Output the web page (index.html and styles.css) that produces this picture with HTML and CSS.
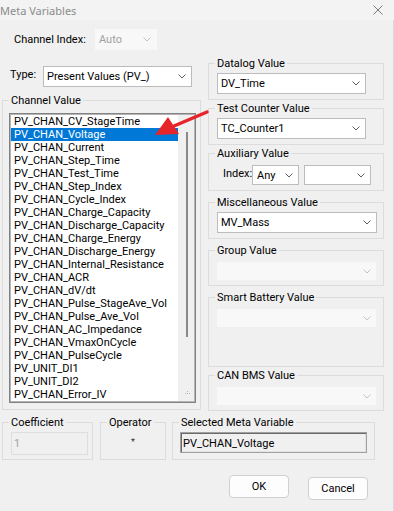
FILE: index.html
```html
<!DOCTYPE html>
<html lang="en">
<head>
    <meta charset="UTF-8">
    <meta name="viewport" content="width=device-width, initial-scale=1.0">
    <title>Meta Variables</title>
    <link rel="stylesheet" href="styles.css">
</head>
<body>
    <div class="window">
        <div class="titlebar">
            <span class="title">Meta Variables</span>
            <svg class="close" width="10" height="10" viewBox="0 0 10 10">
                <path d="M0.5 0.5L9.5 9.5M9.5 0.5L0.5 9.5" stroke="#7d7d7d" stroke-width="1" fill="none"/>
            </svg>
        </div>

        <div class="dialog">
            <div class="columns">
                <div class="left">
                    <div class="row index-row">
                        <span class="row-label">Channel Index:</span>
                        <div class="combo disabled index-combo">
                            <span>Auto</span>
                            <svg class="chev" width="8" height="5" viewBox="0 0 8 5"><path d="M0.5 0.5L4 4L7.5 0.5" fill="none"/></svg>
                        </div>
                    </div>
                    <div class="row type-row">
                        <span class="row-label">Type:</span>
                        <div class="combo type-combo">
                            <span>Present Values (PV_)</span>
                            <svg class="chev" width="8" height="5" viewBox="0 0 8 5"><path d="M0.5 0.5L4 4L7.5 0.5" fill="none"/></svg>
                        </div>
                    </div>

                    <fieldset class="group channel-group">
                        <legend>Channel Value</legend>
                        <div class="group-body">
                            <div class="listbox">
                                <ul class="items">
                                    <li>PV_CHAN_CV_StageTime</li>
                                    <li class="selected">PV_CHAN_Voltage</li>
                                    <li>PV_CHAN_Current</li>
                                    <li>PV_CHAN_Step_Time</li>
                                    <li>PV_CHAN_Test_Time</li>
                                    <li>PV_CHAN_Step_Index</li>
                                    <li>PV_CHAN_Cycle_Index</li>
                                    <li>PV_CHAN_Charge_Capacity</li>
                                    <li>PV_CHAN_Discharge_Capacity</li>
                                    <li>PV_CHAN_Charge_Energy</li>
                                    <li>PV_CHAN_Discharge_Energy</li>
                                    <li>PV_CHAN_Internal_Resistance</li>
                                    <li>PV_CHAN_ACR</li>
                                    <li>PV_CHAN_dV/dt</li>
                                    <li>PV_CHAN_Pulse_StageAve_Vol</li>
                                    <li>PV_CHAN_Pulse_Ave_Vol</li>
                                    <li>PV_CHAN_AC_Impedance</li>
                                    <li>PV_CHAN_VmaxOnCycle</li>
                                    <li>PV_CHAN_PulseCycle</li>
                                    <li>PV_UNIT_DI1</li>
                                    <li>PV_UNIT_DI2</li>
                                    <li>PV_CHAN_Error_IV</li>
                                </ul>
                                <div class="scrollbar">
                                    <div class="thumb"></div>
                                    <svg class="grip" width="5" height="4" viewBox="0 0 5 4">
                                        <rect x="2" y="0" width="1" height="1" fill="#b5b5b5"/>
                                        <rect x="0" y="2" width="1" height="1" fill="#b5b5b5"/>
                                        <rect x="2" y="2" width="1" height="1" fill="#b5b5b5"/>
                                        <rect x="4" y="2" width="1" height="1" fill="#b5b5b5"/>
                                    </svg>
                                </div>
                            </div>
                        </div>
                    </fieldset>
                </div>

                <div class="right">
                    <fieldset class="group">
                        <legend>Datalog Value</legend>
                        <div class="group-body">
                            <div class="combo short-combo">
                                <span>DV_Time</span>
                                <svg class="chev" width="8" height="5" viewBox="0 0 8 5"><path d="M0.5 0.5L4 4L7.5 0.5" fill="none"/></svg>
                            </div>
                        </div>
                    </fieldset>

                    <fieldset class="group">
                        <legend>Test Counter Value</legend>
                        <div class="group-body">
                            <div class="combo short-combo">
                                <span>TC_Counter1</span>
                                <svg class="chev" width="8" height="5" viewBox="0 0 8 5"><path d="M0.5 0.5L4 4L7.5 0.5" fill="none"/></svg>
                            </div>
                        </div>
                    </fieldset>

                    <fieldset class="group">
                        <legend>Auxiliary Value</legend>
                        <div class="group-body aux-body">
                            <span class="aux-label">Index:</span>
                            <div class="combo aux-combo">
                                <span>Any</span>
                                <svg class="chev" width="8" height="5" viewBox="0 0 8 5"><path d="M0.5 0.5L4 4L7.5 0.5" fill="none"/></svg>
                            </div>
                            <div class="combo aux-combo wide">
                                <span></span>
                                <svg class="chev" width="8" height="5" viewBox="0 0 8 5"><path d="M0.5 0.5L4 4L7.5 0.5" fill="none"/></svg>
                            </div>
                        </div>
                    </fieldset>

                    <fieldset class="group spaced">
                        <legend>Miscellaneous Value</legend>
                        <div class="group-body">
                            <div class="combo long-combo">
                                <span>MV_Mass</span>
                                <svg class="chev" width="8" height="5" viewBox="0 0 8 5"><path d="M0.5 0.5L4 4L7.5 0.5" fill="none"/></svg>
                            </div>
                        </div>
                    </fieldset>

                    <fieldset class="group spaced">
                        <legend>Group Value</legend>
                        <div class="group-body off-body">
                            <div class="combo disabled long-combo">
                                <span></span>
                                <svg class="chev" width="8" height="5" viewBox="0 0 8 5"><path d="M0.5 0.5L4 4L7.5 0.5" fill="none"/></svg>
                            </div>
                        </div>
                    </fieldset>

                    <fieldset class="group spaced">
                        <legend>Smart Battery Value</legend>
                        <div class="group-body off-body battery-body">
                            <div class="combo disabled long-combo">
                                <span></span>
                                <svg class="chev" width="8" height="5" viewBox="0 0 8 5"><path d="M0.5 0.5L4 4L7.5 0.5" fill="none"/></svg>
                            </div>
                        </div>
                    </fieldset>

                    <fieldset class="group">
                        <legend>CAN BMS Value</legend>
                        <div class="group-body off-body">
                            <div class="combo disabled long-combo">
                                <span></span>
                                <svg class="chev" width="8" height="5" viewBox="0 0 8 5"><path d="M0.5 0.5L4 4L7.5 0.5" fill="none"/></svg>
                            </div>
                        </div>
                    </fieldset>
                </div>
            </div>

            <div class="bottom-row">
                <fieldset class="group coef-group">
                    <legend>Coefficient</legend>
                    <div class="group-body">
                        <div class="edit coef-edit">1</div>
                    </div>
                </fieldset>
                <fieldset class="group op-group">
                    <legend>Operator</legend>
                    <div class="group-body op-body">*</div>
                </fieldset>
                <fieldset class="group selected-group">
                    <legend>Selected Meta Variable</legend>
                    <div class="group-body">
                        <div class="edit selected-edit">PV_CHAN_Voltage</div>
                    </div>
                </fieldset>
            </div>

            <div class="buttons">
                <button class="btn">OK</button>
                <button class="btn cancel">Cancel</button>
            </div>
        </div>

        <!-- red pointer drawn over the list -->
        <svg class="arrow" width="394" height="511" viewBox="0 0 394 511">
            <path d="M207 112L174 126" stroke="#e5252a" stroke-width="3.5" stroke-linecap="round" fill="none"/>
            <polygon points="155,135 168,117 179,134" fill="#e5252a"/>
        </svg>
    </div>
</body>
</html>
```

FILE: styles.css
```css
* {
    margin: 0;
    padding: 0;
    box-sizing: border-box;
}

body {
    width: 394px;
    height: 511px;
    overflow: hidden;
    background: #f0f0f0;
    color: #000000;
    font-family: Roboto, 'Liberation Sans', sans-serif;
    font-size: 11px;
    line-height: 13px;
}

.window {
    position: relative;
    height: 511px;
}

.titlebar {
    height: 20px;
    background: #f3f3f3;
    display: flex;
    align-items: center;
    justify-content: space-between;
}

.title {
    font-family: 'Noto Sans', sans-serif;
    font-size: 11px;
    color: #8b8b8b;
    margin-left: 0;
}

.close {
    margin-right: 11px;
}

.dialog {
    height: 491px;
    padding-left: 2px;
    border-right: 1px solid #dadada;
}

.columns {
    display: flex;
    gap: 7px;
}

.left {
    width: 199px;
    padding-top: 9px;
}

.right {
    width: 176px;
    padding-top: 37px;
    display: flex;
    flex-direction: column;
    gap: 2px;
}

.row {
    display: flex;
    align-items: center;
    height: 21px;
}

.index-row {
    padding-left: 12px;
}

.index-row .row-label {
    width: 81px;
}

.type-row {
    margin-top: 16px;
    padding-left: 8px;
}

.type-row .row-label {
    width: 33px;
    align-self: flex-start;
    padding-top: 2px;
}

/* combo boxes */
.combo {
    display: flex;
    align-items: center;
    justify-content: space-between;
    height: 21px;
    background: #ffffff;
    border: 1px solid #bcbcbc;
    padding: 0 5px 0 3px;
    white-space: nowrap;
}

.chev path {
    stroke: #606060;
    stroke-width: 1;
}

.combo.disabled {
    background: #f8f8f8;
    border-color: #f8f8f8;
    color: #a0a0a0;
}

.combo.disabled .chev path {
    stroke: #c2c2c2;
}

.index-combo {
    width: 62px;
    background: #f5f5f5;
    border-color: #f5f5f5;
}

.type-combo {
    width: 149px;
}

.short-combo {
    width: 149px;
}

.long-combo {
    width: 160px;
}

.combo.disabled.long-combo {
    width: 159px;
    height: 18px;
    padding-right: 4px;
}

/* group boxes */
.group {
    border: 1px solid #dcdcdc;
    min-width: 0;
}

.group legend {
    margin-left: 6px;
    padding: 0 2px;
    line-height: 13px;
}

.spaced {
    margin-top: 3px;
}

.right .group-body {
    padding: 3px 0 5px 8px;
}

.right .off-body {
    padding-top: 5px;
}

.right .battery-body {
    padding-bottom: 39px;
}

.aux-body {
    display: flex;
    align-items: center;
}

.right .aux-body {
    padding-top: 5px;
}

.aux-label {
    width: 35px;
    padding-left: 6px;
    margin-top: -3px;
}

.aux-combo {
    width: 47px;
    height: 20px;
    padding-left: 4px;
}

.aux-combo.wide {
    width: 67px;
    margin-left: 5px;
}

/* channel list */
.channel-group {
    margin-top: 7px;
}

.channel-group .group-body {
    padding: 6px 4px 6px 6px;
}

.listbox {
    display: flex;
    width: 187px;
    height: 290px;
    background: #ffffff;
    border: 1px solid #828282;
    padding: 1px;
    box-shadow: inset 1px 1px 0 #b4b4b4, inset -1px -1px 0 #b4b4b4;
}

.items {
    list-style: none;
    flex: 1;
    overflow: hidden;
}

.items li {
    height: 13px;
    padding-left: 3px;
    white-space: nowrap;
}

.items li.selected {
    background: #0078d7;
    color: #ffffff;
}

.scrollbar {
    width: 16px;
    background: #f0f0f0;
    position: relative;
}

.thumb {
    width: 2px;
    height: 205px;
    margin: 17px 0 0 8px;
    background: #8a8a8a;
}

.grip {
    display: block;
    margin: 54px 0 0 7px;
}

/* bottom row */
.bottom-row {
    display: flex;
    margin-top: 5px;
}

.coef-group {
    width: 91px;
}

.op-group {
    width: 66px;
    margin-left: 7px;
}

.selected-group {
    width: 203px;
    margin-left: 6px;
}

.bottom-row .group-body {
    padding: 3px 0 4px 8px;
}

.bottom-row .op-body {
    padding: 7px 0 0 0;
    text-align: center;
    font-size: 9px;
    color: #333333;
}

.selected-group .group-body {
    padding-left: 7px;
}

.edit {
    white-space: nowrap;
}

.coef-edit {
    width: 77px;
    height: 23px;
    border: 1px solid #dedede;
    color: #a0a0a0;
    padding: 4px 0 0 2px;
}

.selected-edit {
    width: 187px;
    height: 21px;
    border: 1px solid #a0a0a0;
    box-shadow: inset 1px 1px 0 #6b6b6b, inset -1px -1px 0 #e3e3e3;
    padding: 4px 0 0 2px;
}

/* buttons */
.buttons {
    display: flex;
    gap: 19px;
    margin-top: 15px;
    padding-left: 227px;
    align-items: flex-start;
}

.btn {
    width: 60px;
    height: 23px;
    background: #fdfdfd;
    border: 1px solid #d0d0d0;
    border-radius: 4px;
    font-family: Roboto, 'Liberation Sans', sans-serif;
    font-size: 11px;
    color: #000000;
}

.btn.cancel {
    margin-top: 2px;
}

.arrow {
    position: absolute;
    left: 0;
    top: 0;
    pointer-events: none;
}
```
